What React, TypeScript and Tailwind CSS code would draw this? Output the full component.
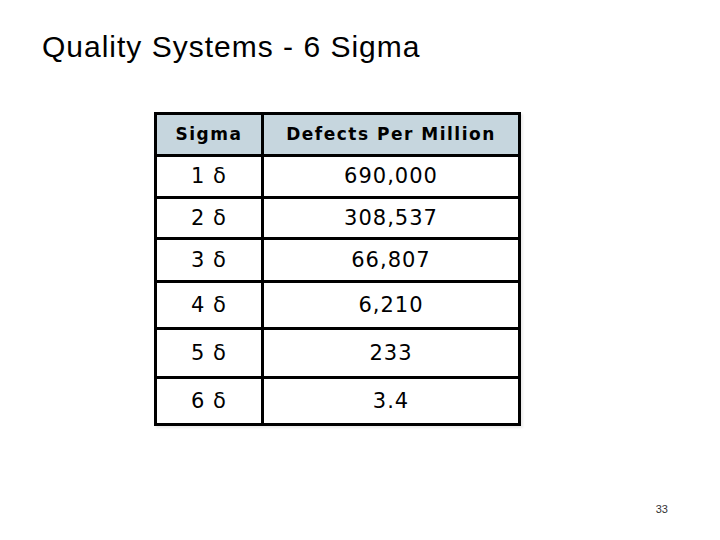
const rows: { sigma: string; defects: string; h: string }[] = [
  { sigma: "1 δ", defects: "690,000", h: "h-[42px]" },
  { sigma: "2 δ", defects: "308,537", h: "h-[41px]" },
  { sigma: "3 δ", defects: "66,807", h: "h-[43px]" },
  { sigma: "4 δ", defects: "6,210", h: "h-[47px]" },
  { sigma: "5 δ", defects: "233", h: "h-[49px]" },
  { sigma: "6 δ", defects: "3.4", h: "h-[47px]" },
];

const cell =
  "flex items-center justify-center border-r-[3px] border-b-[3px] border-black";
const headText =
  "font-['DejaVu_Sans',Verdana,sans-serif] text-[17px] font-bold leading-none tracking-[1.5px] text-black";
const bodyText =
  "font-['DejaVu_Sans',Verdana,sans-serif] text-[21px] leading-none tracking-[1px] text-black";

export default function App() {
  return (
    <div className="relative flex h-[540px] w-[720px] flex-col bg-white">
      <h1 className="ml-[42px] mt-[32px] font-['Liberation_Sans',Arial,sans-serif] text-[30px] leading-[30px] tracking-[1px] text-black">
        Quality Systems - 6 Sigma
      </h1>

      <div className="ml-[154px] mt-[50px] grid w-[367px] grid-cols-[107px_1fr] border-l-[3px] border-t-[3px] border-black shadow-[2px_2px_2px_rgba(0,0,0,0.08)]">
        <div className={`${cell} h-[42px] bg-[#c6d6de]`}>
          <span className={headText}>Sigma</span>
        </div>
        <div className={`${cell} h-[42px] bg-[#c6d6de]`}>
          <span className={headText}>Defects Per Million</span>
        </div>
        {rows.map((r) => (
          <div key={r.sigma} className="contents">
            <div className={`${cell} ${r.h}`}>
              <span className={bodyText}>{r.sigma}</span>
            </div>
            <div className={`${cell} ${r.h}`}>
              <span className={bodyText}>{r.defects}</span>
            </div>
          </div>
        ))}
      </div>

      <div className="mt-auto mb-[25px] mr-[52px] self-end font-['Liberation_Sans',Arial,sans-serif] text-[11px] leading-none text-[#333]">
        33
      </div>
    </div>
  );
}
